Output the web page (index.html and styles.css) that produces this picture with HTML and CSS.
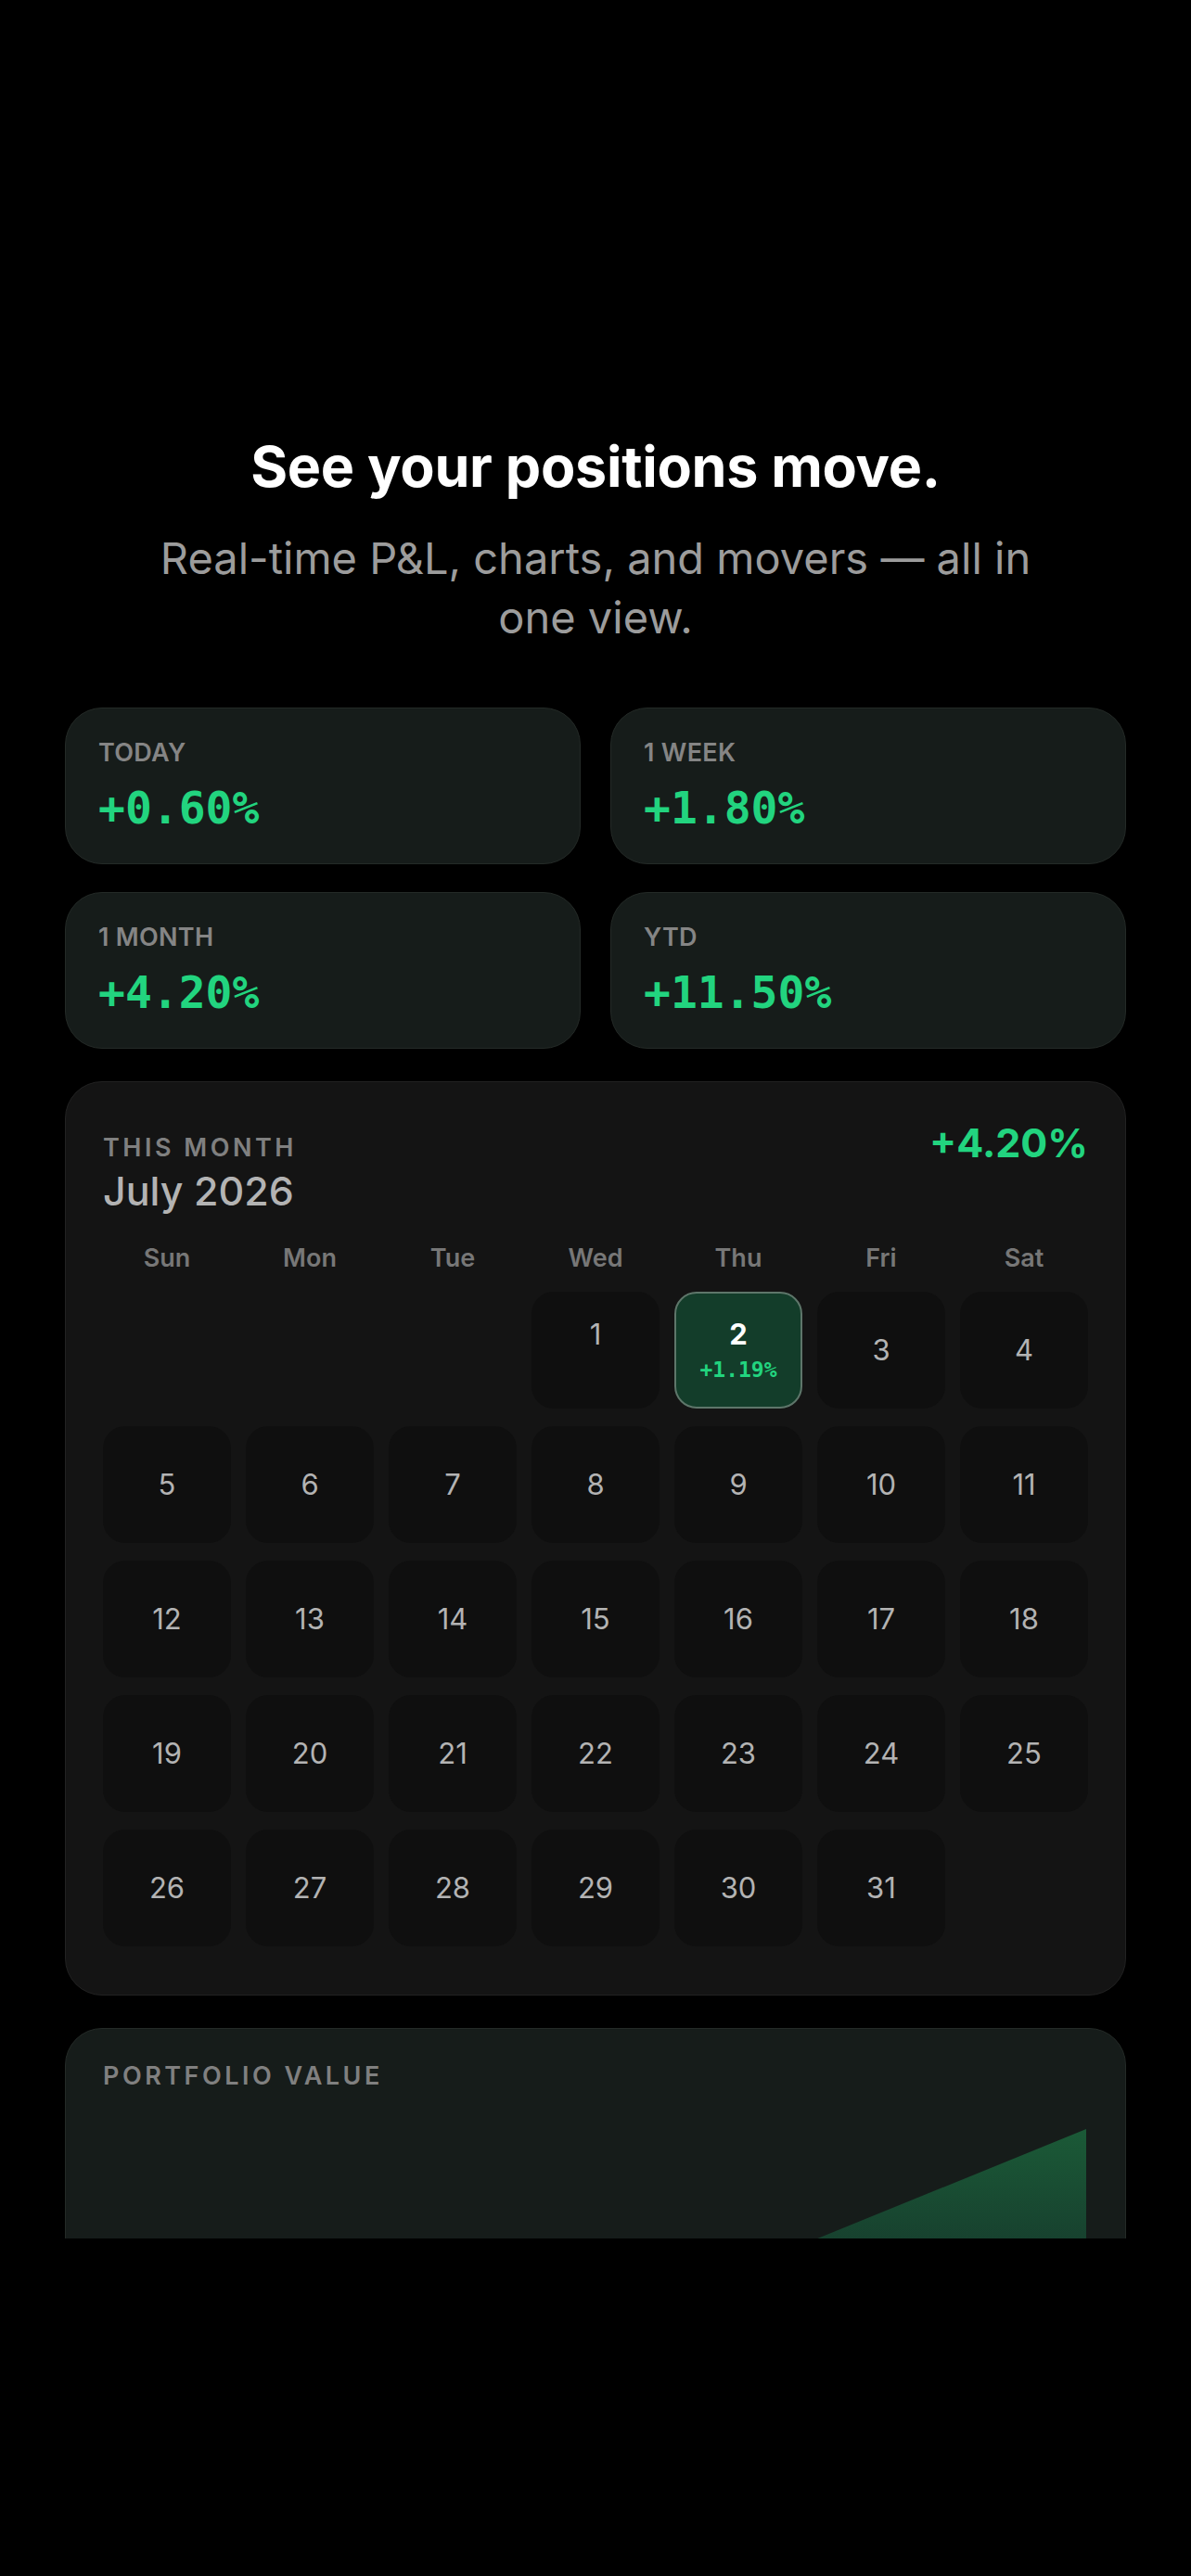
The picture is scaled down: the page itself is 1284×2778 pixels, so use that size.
FILE: index.html
```html
<!DOCTYPE html>
<html lang="en">
<head>
    <meta charset="UTF-8">
    <meta name="viewport" content="width=device-width, initial-scale=1.0">
    <title>See your positions move</title>
    <link rel="stylesheet" href="styles.css">
</head>
<body>
  <div class="screen">
    <section class="hero">
      <h1 class="hero-title">See your positions move.</h1>
      <p class="hero-sub">Real-time P&amp;L, charts, and movers — all in one view.</p>
    </section>

    <div class="stats">
      <div class="stat-card">
        <div class="stat-label">TODAY</div>
        <div class="stat-value">+0.60%</div>
      </div>
      <div class="stat-card">
        <div class="stat-label">1 WEEK</div>
        <div class="stat-value">+1.80%</div>
      </div>
      <div class="stat-card">
        <div class="stat-label">1 MONTH</div>
        <div class="stat-value">+4.20%</div>
      </div>
      <div class="stat-card">
        <div class="stat-label">YTD</div>
        <div class="stat-value">+11.50%</div>
      </div>
    </div>

    <div class="calendar">
      <div class="cal-header">
        <div class="cal-title">
          <div class="eyebrow">THIS MONTH</div>
          <div class="cal-month">July 2026</div>
        </div>
        <div class="cal-total">+4.20%</div>
      </div>

      <div class="weekdays">
        <span>Sun</span><span>Mon</span><span>Tue</span><span>Wed</span><span>Thu</span><span>Fri</span><span>Sat</span>
      </div>

      <div class="days" id="days">
        <!-- filled by script -->
      </div>
    </div>

    <div class="chart-card">
      <div class="eyebrow">PORTFOLIO VALUE</div>
      <svg class="chart" width="1060" height="320" viewBox="0 0 1060 320">
        <defs>
          <linearGradient id="areaFill" x1="0" y1="0" x2="0" y2="1">
            <stop offset="0" stop-color="#1b5a37"/>
            <stop offset="0.6" stop-color="#15332a"/>
            <stop offset="1" stop-color="#16231e"/>
          </linearGradient>
        </defs>
        <polygon points="282,320 1060,3 1060,320" fill="url(#areaFill)"/>
      </svg>
    </div>
  </div>

  <script>
    // July 2026 starts on a Wednesday
    const firstDay = 3;
    const totalDays = 31;
    const pnl = { 2: '+1.19%' };
    const days = document.getElementById('days');

    for (let i = 0; i < firstDay; i++) {
      const blank = document.createElement('div');
      blank.className = 'day empty';
      days.appendChild(blank);
    }

    for (let d = 1; d <= totalDays; d++) {
      const cell = document.createElement('div');
      cell.className = 'day';
      let html = `<span class="day-num">${d}</span>`;
      if (pnl[d]) {
        cell.classList.add('active');
        html += `<span class="day-pnl">${pnl[d]}</span>`;
      } else if (d === 1) {
        // first trading day shows an empty change line
        html += `<span class="day-pnl blank">0.00%</span>`;
      }
      cell.innerHTML = html;
      days.appendChild(cell);
    }
  </script>
</body>
</html>
```

FILE: styles.css
```css
body {
    margin: 0;
    background: #000;
    font-family: Inter, "Noto Sans", sans-serif;
    color: #fff;
}
.screen {
    height: 2414px;
    overflow: hidden;
    padding: 467px 70px 0;
    box-sizing: border-box;
}
.hero {
    text-align: center;
    display: flex;
    flex-direction: column;
    align-items: center;
}
.hero-title {
    margin: 0;
    font-size: 61px;
    line-height: 72px;
    font-weight: 700;
    letter-spacing: -0.3px;
    color: #fff;
}
.hero-sub {
    margin: 31px 0 0;
    max-width: 960px;
    font-size: 47px;
    line-height: 64px;
    font-weight: 400;
    color: #9c9c9c;
}
.stats {
    margin-top: 65px;
    display: grid;
    grid-template-columns: 1fr 1fr;
    column-gap: 32px;
    row-gap: 30px;
}
.stat-card {
    background: #161c1a;
    border: 1px solid #242a27;
    border-radius: 40px;
    padding: 32px 35px;
}
.stat-label {
    font-size: 27px;
    line-height: 32px;
    font-weight: 600;
    color: #858585;
    letter-spacing: 0.3px;
}
.stat-value {
    margin-top: 15px;
    font-family: "DejaVu Sans Mono", "Liberation Mono", monospace;
    font-size: 48px;
    line-height: 56px;
    font-weight: 700;
    color: #22d47f;
}
.calendar {
    margin-top: 35px;
    background: #141414;
    border: 1px solid #222;
    border-radius: 40px;
    padding: 40px 40px 52px;
}
.cal-header {
    display: flex;
    justify-content: space-between;
    align-items: flex-start;
}
.cal-title {
    padding-top: 15px;
}
.eyebrow {
    font-size: 27px;
    line-height: 32px;
    font-weight: 600;
    letter-spacing: 3.5px;
    color: #808080;
}
.cal-month {
    margin-top: 5px;
    font-size: 43px;
    line-height: 50px;
    font-weight: 500;
    color: #b3b3b3;
}
.cal-total {
    font-size: 43px;
    line-height: 50px;
    font-weight: 700;
    color: #22d47f;
}
.weekdays {
    margin-top: 32px;
    display: grid;
    grid-template-columns: repeat(7, 1fr);
    column-gap: 16px;
    text-align: center;
    font-size: 27px;
    line-height: 32px;
    font-weight: 600;
    color: #777;
}
.days {
    margin-top: 20px;
    display: grid;
    grid-template-columns: repeat(7, 1fr);
    grid-auto-rows: 126px;
    column-gap: 16px;
    row-gap: 19px;
}
.day {
    background: #0f0f0f;
    border-radius: 24px;
    display: flex;
    flex-direction: column;
    align-items: center;
    justify-content: center;
    gap: 6px;
}
.day.empty {
    background: transparent;
}
.day-num {
    font-size: 31px;
    line-height: 36px;
    color: #b3b3b3;
}
.day-pnl {
    font-family: "DejaVu Sans Mono", "Liberation Mono", monospace;
    font-size: 23px;
    line-height: 28px;
    font-weight: 700;
    color: #22d47f;
}
.day-pnl.blank {
    visibility: hidden;
}
.day.active {
    background: #133d2a;
    border: 2px solid #5e766a;
}
.day.active .day-num {
    color: #fff;
    font-weight: 700;
}
.chart-card {
    margin-top: 35px;
    background: #161c1a;
    border: 1px solid #242a27;
    border-radius: 40px;
    padding: 35px 40px 0;
    height: 600px;
}
.chart {
    display: block;
    margin-top: 38px;
}
```
